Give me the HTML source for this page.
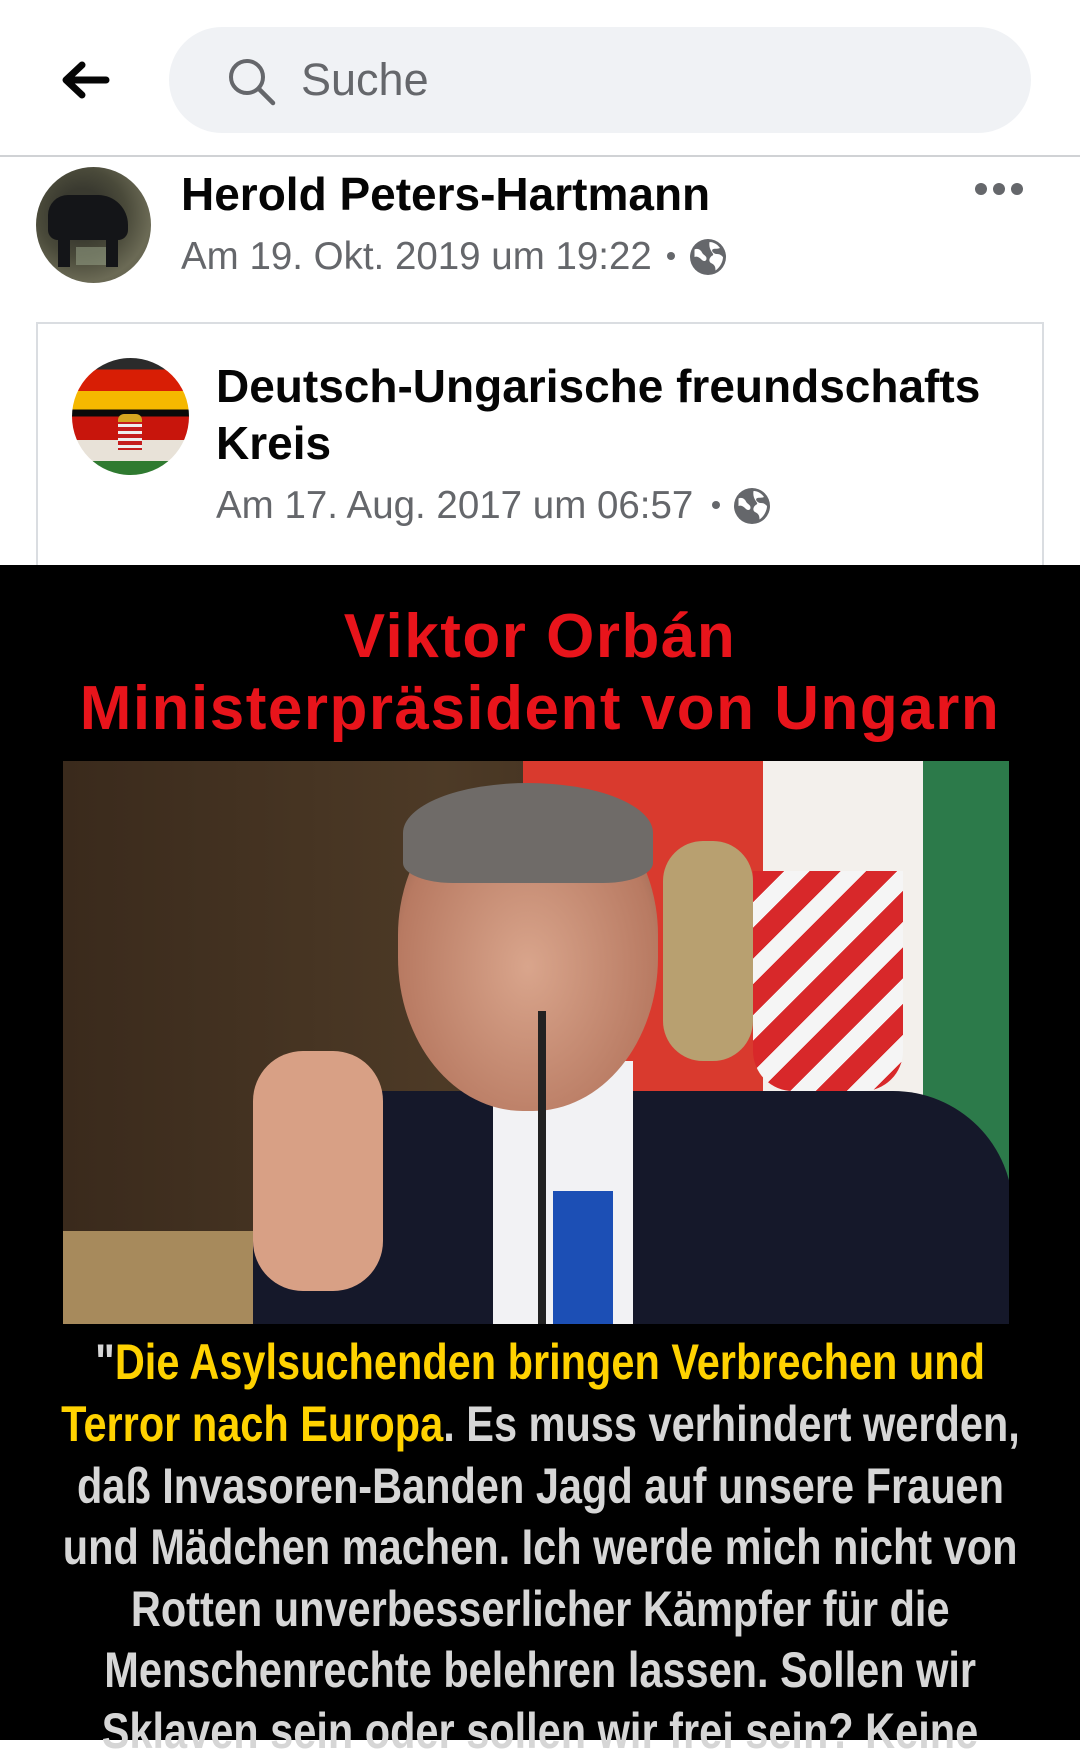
<!DOCTYPE html>
<html><head><meta charset="utf-8">
<style>
*{margin:0;padding:0;box-sizing:border-box}
body{width:1080px;height:1740px;overflow:hidden;background:#fff;font-family:"Liberation Sans",Roboto,sans-serif;position:relative}
.abs{position:absolute}
.name{font-weight:bold;font-size:46px;color:#050505;white-space:nowrap}
.date{font-size:38.5px;color:#65676b;white-space:nowrap}
.q{position:absolute;left:0;width:1080px;display:flex;justify-content:center;font-family:"Liberation Sans",sans-serif;font-weight:bold;font-size:50px;color:#d6d6d6;white-space:nowrap}
.q span.in{display:inline-block;transform:scaleX(.83);transform-origin:center;flex:none}
.y{color:#ffd200}
.red{position:absolute;left:0;width:1080px;text-align:center;font-weight:bold;font-size:62px;color:#e8141b;letter-spacing:1.5px;white-space:nowrap}
</style></head><body>
<!-- header -->
<svg class="abs" style="left:58px;top:60px" width="52" height="40" viewBox="0 0 52 40"><path d="M48 20H10M24 5L8 20l16 15" fill="none" stroke="#050505" stroke-width="7" stroke-linecap="round" stroke-linejoin="round"/></svg>
<div class="abs" style="left:169px;top:27px;width:862px;height:106px;border-radius:53px;background:#f0f2f5"></div>
<svg class="abs" style="left:226px;top:56px" width="52" height="52" viewBox="0 0 52 52"><circle cx="21" cy="21" r="16" fill="none" stroke="#65676b" stroke-width="4"/><path d="M33 33l14 14" stroke="#65676b" stroke-width="4.5" stroke-linecap="round"/></svg>
<div class="abs" style="left:301px;top:54px;font-size:45px;color:#65676b">Suche</div>
<div class="abs" style="left:0;top:155px;width:1080px;height:2px;background:#d0d2d5"></div>

<!-- post header -->
<div class="abs" style="left:36px;top:167px;width:115px;height:116px;border-radius:50%;background:radial-gradient(circle at 40% 40%,#3a3a30 0 25%,#4a4a3a 45%,#6b6a55 70%,#5b5a48);overflow:hidden">
<div class="abs" style="left:12px;top:28px;width:80px;height:45px;background:#141518;border-radius:20px 30px 10px 10px"></div>
<div class="abs" style="left:22px;top:65px;width:12px;height:35px;background:#141518"></div>
<div class="abs" style="left:70px;top:65px;width:12px;height:35px;background:#141518"></div>
<div class="abs" style="left:40px;top:80px;width:30px;height:18px;background:#8f9a80;opacity:.6"></div>
</div>
<div class="abs name" style="left:181px;top:167px">Herold Peters-Hartmann</div>
<div class="abs date" style="left:181px;top:235px">Am 19. Okt. 2019 um 19:22</div>
<div class="abs" style="left:667px;top:252px;width:8px;height:8px;border-radius:50%;background:#65676b"></div>
<svg class="abs" style="left:690px;top:239px" width="36" height="36" viewBox="0 0 24 24"><circle cx="12" cy="12" r="12" fill="#65676b"/><path d="M3 7c2-1 4 0 5 2s3 2 3 4-2 2-3 1-3-3-5-2zM13 2c2 0 5 1 7 4-2 1-4 0-5 1s1 3 3 3 3 1 4 2c0 3-2 7-5 9 0-3-1-4-3-5s-1-4 1-5-3-3-2-9z" fill="#fff"/></svg>
<div class="abs" style="left:975px;top:183px;width:48px;height:13px">
<span class="abs" style="left:0;top:0;width:12px;height:12px;border-radius:50%;background:#65676b"></span>
<span class="abs" style="left:18px;top:0;width:12px;height:12px;border-radius:50%;background:#65676b"></span>
<span class="abs" style="left:36px;top:0;width:12px;height:12px;border-radius:50%;background:#65676b"></span>
</div>

<!-- shared card -->
<div class="abs" style="left:36px;top:322px;width:1008px;height:260px;border:2px solid #dadde1;border-bottom:none"></div>
<div class="abs" style="left:72px;top:358px;width:117px;height:117px;border-radius:50%;overflow:hidden;background:linear-gradient(#2b2b2b 0 10%,#d81e05 10% 28%,#f5b800 28% 44%,#0a0a0a 44% 50%,#c8150c 50% 70%,#e8e2d8 70% 88%,#2f7a30 88%)">
<div class="abs" style="left:46px;top:62px;width:24px;height:30px;background:repeating-linear-gradient(#c51d1d 0 4px,#eee 4px 7px)"></div>
<div class="abs" style="left:46px;top:56px;width:24px;height:8px;background:#d4a520;border-radius:6px 6px 0 0"></div>
</div>
<div class="abs name" style="left:216px;top:358px;line-height:57px;white-space:nowrap">Deutsch-Ungarische freundschafts<br>Kreis</div>
<div class="abs date" style="left:216px;top:484px">Am 17. Aug. 2017 um 06:57</div>
<div class="abs" style="left:712px;top:501px;width:8px;height:8px;border-radius:50%;background:#65676b"></div>
<svg class="abs" style="left:734px;top:488px" width="36" height="36" viewBox="0 0 24 24"><circle cx="12" cy="12" r="12" fill="#65676b"/><path d="M3 7c2-1 4 0 5 2s3 2 3 4-2 2-3 1-3-3-5-2zM13 2c2 0 5 1 7 4-2 1-4 0-5 1s1 3 3 3 3 1 4 2c0 3-2 7-5 9 0-3-1-4-3-5s-1-4 1-5-3-3-2-9z" fill="#fff"/></svg>

<!-- image -->
<div class="abs" style="left:0;top:565px;width:1080px;height:1175px;background:#000"></div>
<div class="red" style="top:601px">Viktor Orbán</div>
<div class="red" style="top:673px">Ministerpräsident von Ungarn</div>

<div class="abs" style="left:63px;top:761px;width:946px;height:563px;overflow:hidden;background:linear-gradient(90deg,#3a2a1c,#4d3a26 40%,#2c2116)">
<div class="abs" style="left:460px;top:0;width:300px;height:380px;background:#d93a2e"></div>
<div class="abs" style="left:700px;top:0;width:180px;height:400px;background:#f3f0ec"></div>
<div class="abs" style="left:860px;top:0;width:90px;height:460px;background:#2c7a4a"></div>
<div class="abs" style="left:600px;top:80px;width:90px;height:220px;border-radius:40px;background:#b8a070"></div>
<div class="abs" style="left:690px;top:110px;width:150px;height:220px;border-radius:0 0 40px 40px;background:repeating-linear-gradient(135deg,#d8282a 0 22px,#f5f5f5 22px 40px)"></div>
<div class="abs" style="left:0;top:470px;width:240px;height:93px;background:#a78a5c"></div>
<!-- body -->
<div class="abs" style="left:190px;top:330px;width:760px;height:300px;border-radius:120px 120px 0 0;background:#15182a"></div>
<div class="abs" style="left:430px;top:300px;width:140px;height:280px;background:#f2f2f4"></div>
<div class="abs" style="left:490px;top:430px;width:60px;height:140px;background:#1c4fb5"></div>
<!-- head -->
<div class="abs" style="left:335px;top:30px;width:260px;height:320px;border-radius:45% 45% 48% 48%;background:radial-gradient(ellipse at 50% 55%,#d9a58c,#b87a62 70%,#7a5444)"></div>
<div class="abs" style="left:340px;top:22px;width:250px;height:100px;border-radius:50% 50% 20% 20%;background:#6f6b68"></div>
<!-- hand -->
<div class="abs" style="left:190px;top:290px;width:130px;height:240px;border-radius:50px;background:#d8a085"></div>
<div class="abs" style="left:475px;top:250px;width:8px;height:320px;background:#222"></div>
</div>

<div class="q" style="top:1333px"><span class="in">"<span class="y">Die Asylsuchenden bringen Verbrechen und</span></span></div>
<div class="q" style="top:1395px"><span class="in"><span class="y">Terror nach Europa</span>. Es muss verhindert werden,</span></div>
<div class="q" style="top:1457px"><span class="in">daß Invasoren-Banden Jagd auf unsere Frauen</span></div>
<div class="q" style="top:1518px"><span class="in">und Mädchen machen. Ich werde mich nicht von</span></div>
<div class="q" style="top:1580px"><span class="in">Rotten unverbesserlicher Kämpfer für die</span></div>
<div class="q" style="top:1641px"><span class="in">Menschenrechte belehren lassen. Sollen wir</span></div>
<div class="q" style="top:1702px"><span class="in">Sklaven sein oder sollen wir frei sein? Keine</span></div>
</body></html>
